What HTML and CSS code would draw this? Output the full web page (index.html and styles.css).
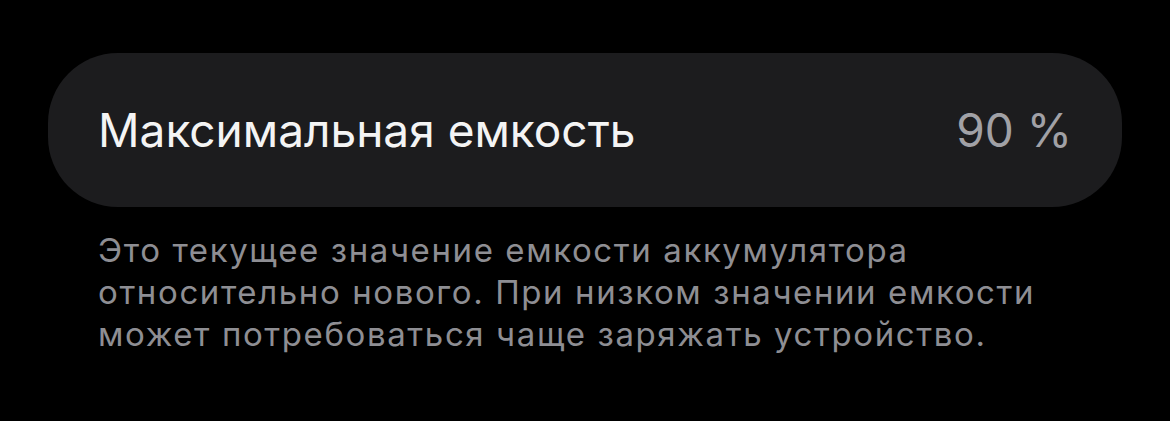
FILE: index.html
```html
<!DOCTYPE html>
<html lang="ru">
<head>
    <meta charset="UTF-8">
    <meta name="viewport" content="width=device-width, initial-scale=1.0">
    <title>Состояние аккумулятора</title>
    <link rel="stylesheet" href="styles.css">
</head>
<body>

    <!-- Ячейка с максимальной емкостью -->
    <div class="cell">
        <span class="cell-title">Максимальная емкость</span>
        <span class="cell-value">90 %</span>
    </div>

    <!-- Пояснение под ячейкой -->
    <p class="footer">Это текущее значение емкости аккумулятора относительно нового. При низком значении емкости может потребоваться чаще заряжать устройство.</p>

</body>
</html>
```

FILE: styles.css
```css
body {
    margin: 0;
    padding: 53px 48px 0 48px;
    background: #000;
    font-family: Inter, "Noto Sans", sans-serif;
}
.cell {
    display: flex;
    align-items: center;
    justify-content: space-between;
    height: 154px;
    padding: 0 50px 0 50px;
    background-color: #1c1c1e;
    border-radius: 70px;
}
.cell-title { color: #f4f4f4; font-size: 46px; }
.cell-value { color: #a1a1a6; font-size: 46px; }
.footer {
    margin: 22px 0 0 50px;
    max-width: 960px;
    color: #8e8e93;
    font-size: 33px;
    letter-spacing: 1.6px;
    line-height: 42px;
}
```
